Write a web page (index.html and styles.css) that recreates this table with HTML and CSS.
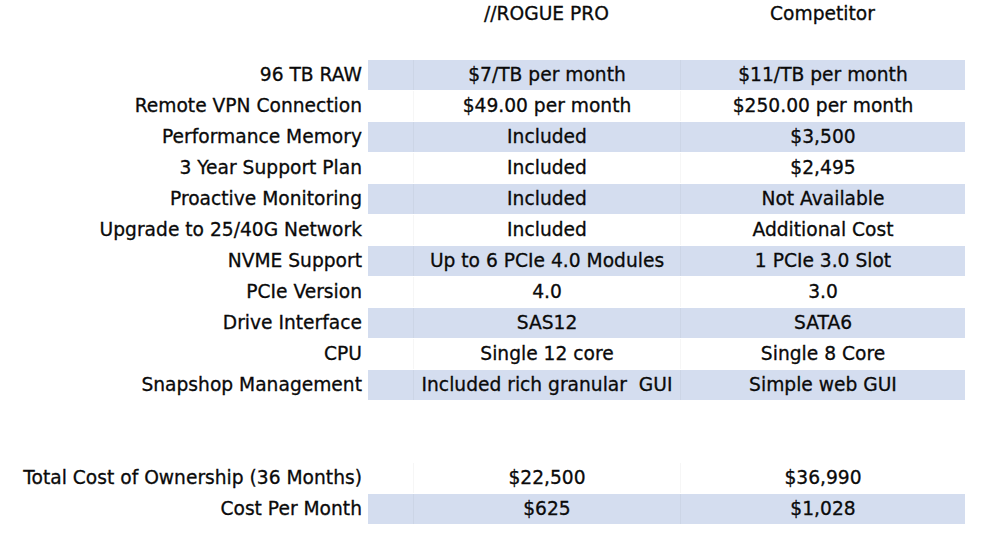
FILE: index.html
```html
<!DOCTYPE html>
<html lang="en">
<head>
<meta charset="utf-8">
<title>ROGUE PRO vs Competitor</title>
<link rel="stylesheet" href="styles.css">
</head>
<body>
<div class="sheet">
  <div class="row head">
    <div class="label"></div><div class="pad"></div>
    <div class="cell">//ROGUE PRO</div>
    <div class="cell">Competitor</div>
  </div>
  <div class="row blank"><div class="label"></div><div class="pad"></div><div class="cell"></div><div class="cell"></div></div>

  <div class="row band"><div class="label">96 TB RAW</div><div class="pad"></div><div class="cell">$7/TB per month</div><div class="cell">$11/TB per month</div></div>
  <div class="row"><div class="label">Remote VPN Connection</div><div class="pad"></div><div class="cell">$49.00 per month</div><div class="cell">$250.00 per month</div></div>
  <div class="row band"><div class="label">Performance Memory</div><div class="pad"></div><div class="cell">Included</div><div class="cell">$3,500</div></div>
  <div class="row"><div class="label">3 Year Support Plan</div><div class="pad"></div><div class="cell">Included</div><div class="cell">$2,495</div></div>
  <div class="row band"><div class="label">Proactive Monitoring</div><div class="pad"></div><div class="cell">Included</div><div class="cell">Not Available</div></div>
  <div class="row"><div class="label">Upgrade to 25/40G Network</div><div class="pad"></div><div class="cell">Included</div><div class="cell">Additional Cost</div></div>
  <div class="row band"><div class="label">NVME Support</div><div class="pad"></div><div class="cell">Up to 6 PCIe 4.0 Modules</div><div class="cell">1 PCIe 3.0 Slot</div></div>
  <div class="row"><div class="label">PCIe Version</div><div class="pad"></div><div class="cell">4.0</div><div class="cell">3.0</div></div>
  <div class="row band"><div class="label">Drive Interface</div><div class="pad"></div><div class="cell">SAS12</div><div class="cell">SATA6</div></div>
  <div class="row"><div class="label">CPU</div><div class="pad"></div><div class="cell">Single 12 core</div><div class="cell">Single 8 Core</div></div>
  <div class="row band"><div class="label">Snapshop Management</div><div class="pad"></div><div class="cell">Included rich granular&nbsp; GUI</div><div class="cell">Simple web GUI</div></div>

  <div class="row blank"><div class="label"></div><div class="pad"></div><div class="cell"></div><div class="cell"></div></div>
  <div class="row blank"><div class="label"></div><div class="pad"></div><div class="cell"></div><div class="cell"></div></div>

  <div class="row"><div class="label">Total Cost of Ownership (36 Months)</div><div class="pad"></div><div class="cell">$22,500</div><div class="cell">$36,990</div></div>
  <div class="row band"><div class="label">Cost Per Month</div><div class="pad"></div><div class="cell">$625</div><div class="cell">$1,028</div></div>
</div>
</body>
</html>
```

FILE: styles.css
```css
html, body {
  margin: 0;
  padding: 0;
  background: #ffffff;
}

body {
  font-family: "DejaVu Sans", "Liberation Sans", sans-serif;
  font-size: 18.67px;
  color: #0a0a0a;
  -webkit-text-stroke: 0.3px #0a0a0a;
}

.sheet {
  display: flex;
  flex-direction: column;
  width: 989px;
}

.row {
  display: grid;
  grid-template-columns: 368px 45px 267px 285px;
  height: 31px;
  padding-bottom: 1px;
  box-sizing: border-box;
  line-height: 30px;
  white-space: nowrap;
}

.row.head {
  height: 29px;
  padding-bottom: 2px;
  line-height: 27px;
}

.label {
  text-align: right;
  padding-right: 6px;
}

.cell {
  text-align: center;
  border-left: 1px solid rgba(0, 0, 0, 0.035);
}

.head .cell,
.blank .cell {
  border-left: none;
}

.band .pad,
.band .cell {
  background: #d4ddef;
}
```
